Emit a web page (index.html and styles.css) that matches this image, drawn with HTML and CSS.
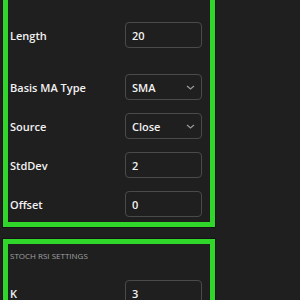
FILE: index.html
```html
<!DOCTYPE html>
<html lang="en">
<head>
    <meta charset="UTF-8">
    <meta name="viewport" content="width=device-width, initial-scale=1.0">
    <title>Indicator Settings</title>
    <link rel="stylesheet" href="styles.css">
</head>
<body>
    <div class="panel">
        <section class="group group-main">
            <h3 class="main-title">BOLLINGER BANDS</h3>
            <div class="row row-spaced">
                <label class="label">Length</label>
                <div class="field">20</div>
            </div>
            <div class="row">
                <label class="label">Basis MA Type</label>
                <div class="field select">
                    <span>SMA</span>
                    <svg class="chevron" width="9" height="5" viewBox="0 0 9 5"><path d="M1 1 L4.5 4 L8 1" fill="none" stroke="#9a9a9a" stroke-width="1.2"/></svg>
                </div>
            </div>
            <div class="row">
                <label class="label">Source</label>
                <div class="field select">
                    <span>Close</span>
                    <svg class="chevron" width="9" height="5" viewBox="0 0 9 5"><path d="M1 1 L4.5 4 L8 1" fill="none" stroke="#9a9a9a" stroke-width="1.2"/></svg>
                </div>
            </div>
            <div class="row">
                <label class="label">StdDev</label>
                <div class="field">2</div>
            </div>
            <div class="row">
                <label class="label">Offset</label>
                <div class="field">0</div>
            </div>
        </section>

        <section class="group group-stoch">
            <h4 class="group-title">STOCH RSI SETTINGS</h4>
            <div class="row">
                <label class="label">K</label>
                <div class="field">3</div>
            </div>
        </section>
    </div>
</body>
</html>
```

FILE: styles.css
```css
body {
    margin: 0;
    background-color: #1f1f1f;
    color: #f0f0f0;
    font-family: 'Open Sans', 'Noto Sans', sans-serif;
    overflow: hidden;
}
.panel {
    width: 212px;
    padding-left: 3px;
}
.group {
    border: 5px solid #30d62a;
    padding: 0 8px 5px 2px;
    box-shadow: 0 0 0 1px #141414;
}
.group-main {
    margin-top: -18px;
}
.main-title {
    margin: 0 0 19px;
    font-size: 13px;
    line-height: 16px;
    font-weight: 700;
    color: #d8d8d8;
    letter-spacing: 1px;
    white-space: nowrap;
}
.group-stoch {
    margin-top: 12px;
}
.group-title {
    margin: 6px 0 18px;
    font-size: 8px;
    line-height: 12px;
    font-weight: 400;
    color: #a0a0a0;
    white-space: nowrap;
}
.row {
    display: flex;
    justify-content: space-between;
    align-items: center;
    height: 26px;
}
.row + .row {
    margin-top: 13px;
}
.row-spaced {
    margin-bottom: 26px;
}
.label {
    font-size: 11px;
    font-weight: 600;
    color: #f2f2f2;
}
.field {
    box-sizing: border-box;
    width: 77px;
    height: 26px;
    border: 1px solid #4a4a4a;
    border-radius: 4px;
    padding: 0 6px;
    display: flex;
    align-items: center;
    font-size: 11px;
    font-weight: 600;
    color: #f2f2f2;
}
.select {
    justify-content: space-between;
}
```
